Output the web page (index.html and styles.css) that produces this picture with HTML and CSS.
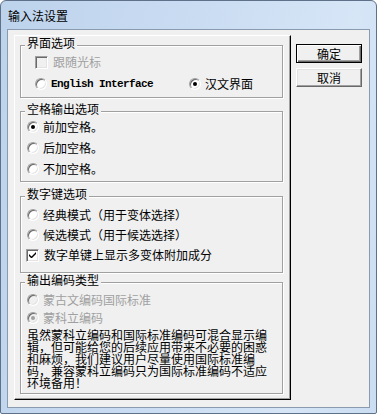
FILE: index.html
```html
<!DOCTYPE html>
<html>
<head>
    <meta charset="utf-8">
    <title>输入法设置</title>
    <link rel="stylesheet" href="styles.css">
</head>
<body>
    <div class="window">
        <div class="titlebar">输入法设置</div>
        <div class="client">
            <div class="panel">
                <div class="group group-ui">
                    <div class="group-title">界面选项</div>
                    <div class="rows">
                        <div class="row disabled"><span class="check"></span>跟随光标</div>
                        <div class="row">
                            <div class="opt opt-latin"><span class="radio"></span><span class="latin">English Interface</span></div>
                            <div class="opt"><span class="radio checked"></span>汉文界面</div>
                        </div>
                    </div>
                </div>

                <div class="group group-space">
                    <div class="group-title">空格输出选项</div>
                    <div class="rows">
                        <div class="row"><span class="radio checked"></span>前加空格。</div>
                        <div class="row"><span class="radio"></span>后加空格。</div>
                        <div class="row"><span class="radio"></span>不加空格。</div>
                    </div>
                </div>

                <div class="group group-num">
                    <div class="group-title">数字键选项</div>
                    <div class="rows">
                        <div class="row"><span class="radio"></span>经典模式（用于变体选择）</div>
                        <div class="row"><span class="radio"></span>候选模式（用于候选选择）</div>
                        <div class="row"><span class="check checked"><svg width="7" height="7" viewBox="0 0 7 7"><path d="M0 2 L0 4 L2 6 L3 6 L7 2 L7 0 L2.5 4.5 Z" fill="#000"/></svg></span>数字单键上显示多变体附加成分</div>
                    </div>
                </div>

                <div class="group group-code">
                    <div class="group-title">输出编码类型</div>
                    <div class="rows">
                        <div class="row disabled"><span class="radio"></span>蒙古文编码国际标准</div>
                        <div class="row disabled"><span class="radio checked"></span>蒙科立编码</div>
                    </div>
                    <p class="note">虽然蒙科立编码和国际标准编码可混合显示编<br>辑，但可能给您的后续应用带来不必要的困惑<br>和麻烦，我们建议用户尽量使用国际标准编<br>码，兼容蒙科立编码只为国际标准编码不适应<br>环境备用！</p>
                </div>
            </div>

            <div class="buttons">
                <button class="btn btn-default">确定</button>
                <button class="btn">取消</button>
            </div>
        </div>
    </div>
</body>
</html>
```

FILE: styles.css
```css
body {
    margin: 0;
    font-family: "Noto Sans CJK SC", sans-serif;
    font-size: 12px;
    color: #000;
}

.window {
    box-sizing: border-box;
    width: 377px;
    height: 414px;
    border: 1px solid #5f7189;
    border-radius: 6px 6px 2px 2px;
    padding: 0 6px 5px 6px;
    background: linear-gradient(100deg, #bdd3ec 0%, #cadcf2 45%, #d6e6f7 80%, #cbddf2 100%);
}

.titlebar {
    height: 28px;
    line-height: 29px;
    padding-left: 1px;
    color: #000;
}

.client {
    box-sizing: border-box;
    height: 379px;
    display: flex;
    align-items: flex-start;
    padding: 5px 0 0 6px;
    background: #f0f0f0;
    border: 1px solid #8a9bb0;
}

/* raised panel round the option groups */
.panel {
    box-sizing: border-box;
    width: 277px;
    height: 365px;
    padding: 9px 0 0 5px;
    border: 1px solid;
    border-color: #fff #000 #000 #fff;
    box-shadow: inset -1px -1px 0 #a0a0a0;
}

.group {
    box-sizing: border-box;
    width: 263px;
    border: 1px solid #a0a0a0;
    box-shadow: 1px 1px 0 #fff, inset 1px 1px 0 #fff;
    line-height: 12px;
}

.group-title {
    width: fit-content;
    height: 12px;
    margin: -9px 0 0 4px;
    padding: 0 2px;
    background: #f0f0f0;
}

.group-ui .rows {
    margin-top: 2px;
    padding: 0 0 2px 14px;
}

.group-ui .row {
    height: 22px;
}

.group-space {
    margin-top: 13px;
}

.group-space .rows {
    margin-top: 1px;
    padding: 0 0 2px 6px;
}

.group-space .row {
    height: 21px;
}

.group-num {
    margin-top: 14px;
}

.group-num .rows {
    margin-top: 5px;
    padding: 0 0 7px 6px;
}

.group-num .row {
    height: 20px;
}

.group-num .check {
    margin-left: -1px;
}

.group-code {
    margin-top: 9px;
    padding-bottom: 4px;
}

.group-code .rows {
    margin-top: 5px;
    padding-left: 6px;
}

.group-code .row {
    height: 18px;
}

.row {
    display: flex;
    align-items: center;
}

.opt {
    display: flex;
    align-items: center;
}

.opt-latin {
    width: 154px;
}

.latin {
    font-family: "Liberation Mono", monospace;
    font-size: 11px;
    font-weight: bold;
    letter-spacing: -0.6px;
}

.disabled {
    color: #a0a0a0;
}

.radio {
    box-sizing: border-box;
    flex: none;
    width: 12px;
    height: 12px;
    margin-right: 4px;
    border: 1px solid;
    border-color: #a0a0a0 #fff #fff #a0a0a0;
    border-radius: 50%;
    box-shadow: inset 1px 1px 0 #696969, inset -1px -1px 0 #e3e3e3;
    background: #fff;
    display: flex;
    align-items: center;
    justify-content: center;
}

.radio.checked::after {
    content: "";
    width: 4px;
    height: 4px;
    border-radius: 50%;
    background: #000;
}

.disabled .radio {
    background: #f0f0f0;
}

.disabled .radio.checked::after {
    background: #a0a0a0;
}

.check {
    box-sizing: border-box;
    flex: none;
    width: 13px;
    height: 13px;
    margin-right: 5px;
    border: 1px solid;
    border-color: #a0a0a0 #fff #fff #a0a0a0;
    box-shadow: inset 1px 1px 0 #696969, inset -1px -1px 0 #e3e3e3;
    background: #fff;
    display: flex;
    align-items: center;
    justify-content: center;
}

.check svg {
    display: block;
}

.disabled .check {
    background: #f0f0f0;
}

.note {
    margin: 2px 0 0 0;
    padding-left: 6px;
    line-height: 12px;
    white-space: nowrap;
}

.buttons {
    display: flex;
    flex-direction: column;
    gap: 5px;
    margin: 9px 0 0 5px;
}

.btn {
    box-sizing: border-box;
    width: 66px;
    height: 19px;
    padding: 0;
    font-family: "Noto Sans CJK SC", sans-serif;
    font-size: 12px;
    line-height: 12px;
    color: #000;
    background: #f0f0f0;
    border: 1px solid;
    border-color: #fff #696969 #696969 #fff;
    box-shadow: inset -1px -1px 0 #a0a0a0, inset 1px 1px 0 #e3e3e3;
}

.btn-default {
    border: 1px solid #000;
    box-shadow: inset 1px 1px 0 #fff, inset -1px -1px 0 #696969, inset -2px -2px 0 #a0a0a0;
}
```
